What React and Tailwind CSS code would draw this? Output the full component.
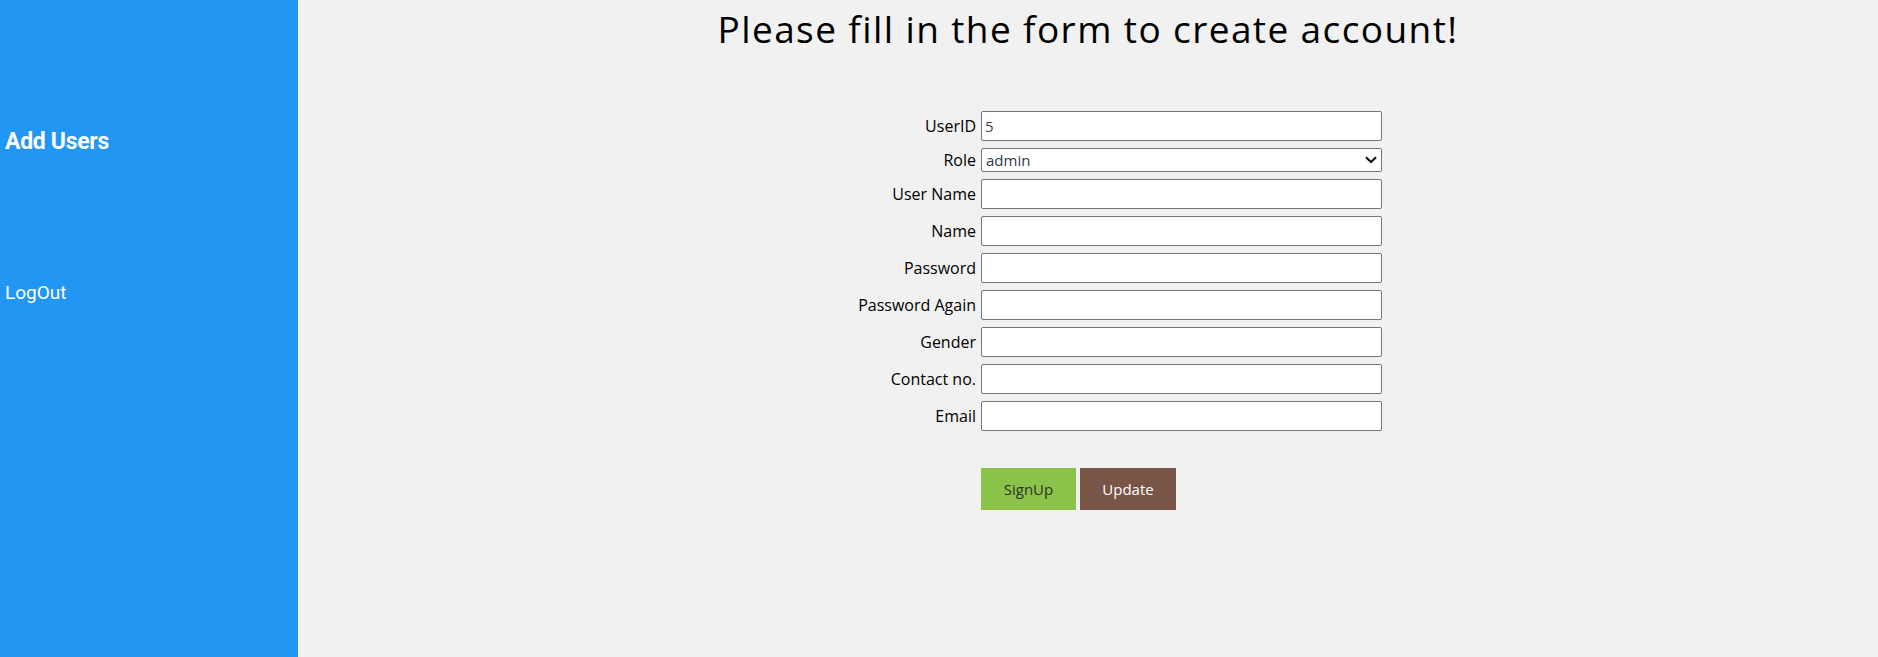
import React, { useState } from "react";

const fields = [
  { label: "User Name", type: "text" },
  { label: "Name", type: "text" },
  { label: "Password", type: "password" },
  { label: "Password Again", type: "password" },
  { label: "Gender", type: "text" },
  { label: "Contact no.", type: "text" },
  { label: "Email", type: "email" },
];

const FormRow = ({ label, children }) => (
  <div className="flex items-center">
    <label className="w-[160px] pr-[5px] text-right text-[16px] font-medium text-black">
      {label}
    </label>
    {children}
  </div>
);

const App = () => {
  const [role, setRole] = useState("admin");

  return (
    <div className="flex min-h-screen w-full font-['Open_Sans',sans-serif]">
      {/* Sidebar */}
      <aside className="w-[298px] shrink-0 bg-[#2196f3] pl-[5px] font-['Roboto',sans-serif] text-white">
        <h2 className="mt-[128px] text-[23px] font-bold leading-[28px] tracking-[-0.3px]">
          Add Users
        </h2>
        <a href="#" className="mt-[126px] block text-[19px] leading-[21px]">
          LogOut
        </a>
      </aside>

      {/* Main */}
      <main className="flex-1 bg-[#f1f1f1]">
        <h1 className="mt-[4px] text-center text-[37px] leading-[49px] tracking-[1.4px] text-black">
          Please fill in the form to create account!
        </h1>

        <form className="ml-[523px] mt-[58px] flex flex-col gap-[7px]">
          <FormRow label="UserID">
            <input
              type="text"
              defaultValue="5"
              className="h-[30px] w-[401px] rounded-[2px] border border-[#767676] bg-white px-[3px] text-[15px] text-[#444]"
            />
          </FormRow>
          <FormRow label="Role">
            <div className="relative h-[24px] w-[401px]">
              <select
                value={role}
                onChange={(e) => setRole(e.target.value)}
                className="h-full w-full appearance-none rounded-[2px] border border-[#767676] bg-white pl-[4px] text-[15px] leading-[20px] text-[#2f3a4a]"
              >
                <option value="admin">admin</option>
                <option value="user">user</option>
              </select>
              <svg
                className="pointer-events-none absolute right-[5px] top-[8px]"
                width="12"
                height="8"
                viewBox="0 0 12 8"
                fill="none"
                stroke="#111"
                strokeWidth="2.2"
              >
                <path d="M1 1.2 L6 6 L11 1.2" />
              </svg>
            </div>
          </FormRow>
          {fields.map((f) => (
            <FormRow key={f.label} label={f.label}>
              <input
                type={f.type}
                className="h-[30px] w-[401px] rounded-[2px] border border-[#767676] bg-white px-[3px] text-[15px]"
              />
            </FormRow>
          ))}

          <div className="ml-[160px] mt-[30px] flex gap-[4px]">
            <button
              type="button"
              className="h-[42px] w-[95px] bg-[#8bc34a] text-[15px] text-[#2b3320]"
            >
              SignUp
            </button>
            <button
              type="button"
              className="h-[42px] w-[96px] bg-[#795548] text-[15px] text-white"
            >
              Update
            </button>
          </div>
        </form>
      </main>
    </div>
  );
};

export default App;
